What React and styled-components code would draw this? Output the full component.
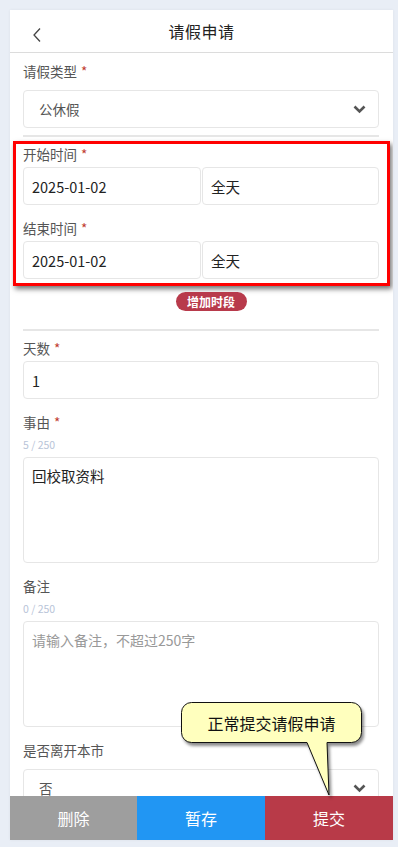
import React from 'react';
import styled, { createGlobalStyle } from 'styled-components';

const GlobalStyle = createGlobalStyle`
  html, body {
    margin: 0;
    padding: 0;
    background: #e9eef6;
    font-family: "Noto Sans CJK SC", "Noto Sans", sans-serif;
  }
  * { box-sizing: border-box; }
`;

const Page = styled.div`
  padding: 10px 5px 7px 10px;
`;

const Panel = styled.div`
  position: relative;
  width: 383px;
  height: 830px;
  background: #fff;
  display: flex;
  flex-direction: column;
  box-shadow: 0 0 3px rgba(0, 0, 0, 0.06);
`;

const Header = styled.div`
  height: 43px;
  flex-shrink: 0;
  display: flex;
  align-items: center;
  justify-content: center;
  position: relative;
  border-bottom: 1px solid #dcdcdc;
`;

const BackButton = styled.div`
  position: absolute;
  left: 21px;
  top: 14px;
  width: 14px;
  height: 16px;
`;

const Title = styled.div`
  font-size: 16px;
  color: #222;
  letter-spacing: 0.5px;
`;

const Body = styled.div`
  flex: 1;
  overflow: hidden;
  padding: 8px 14px 0 13px;
`;

const Label = styled.div`
  font-size: 13.5px;
  line-height: 20px;
  color: #555;
  margin-top: ${p => p.$top || 0}px;
`;

const Star = styled.span`
  color: #c0392b;
  margin-left: 4px;
`;

const Select = styled.div`
  height: 38px;
  margin-top: 9px;
  border: 1px solid #e6e6e6;
  border-radius: 4px;
  display: flex;
  align-items: center;
  justify-content: space-between;
  padding: 0 12px 0 15px;
  font-size: 13.5px;
  color: #555;
`;

const Divider = styled.div`
  height: 2px;
  background: #e6e6e6;
  margin-top: ${p => p.$top || 0}px;
`;

const Highlight = styled.div`
  margin: 4px -11px 0 -10px;
  border: 3px solid #ff0000;
  padding: 0 8px 4px 7px;
  box-shadow: 2px 3px 5px rgba(0, 0, 0, 0.55);
`;

const DateRow = styled.div`
  display: grid;
  grid-template-columns: 178px 1fr;
  gap: 1px;
  margin-top: 3px;
`;

const Input = styled.div`
  height: 38px;
  border: 1px solid #e6e6e6;
  border-radius: 4px;
  display: flex;
  align-items: center;
  padding-left: 8px;
  font-size: 14.5px;
  color: #222;
  margin-top: ${p => p.$top || 0}px;
`;

const AddRow = styled.div`
  display: flex;
  justify-content: center;
  padding-left: 20px;
  margin-top: 6px;
`;

const AddButton = styled.div`
  width: 71px;
  height: 19px;
  border-radius: 10px;
  background: #b83a4b;
  color: #fff;
  font-size: 12px;
  font-weight: bold;
  line-height: 19px;
  text-align: center;
`;

const Count = styled.div`
  font-size: 10.5px;
  line-height: 16px;
  color: #b8c4d8;
  margin-top: 5px;
`;

const TextArea = styled.div`
  position: relative;
  height: 106px;
  margin-top: 4px;
  border: 1px solid #e6e6e6;
  border-radius: 4px;
  padding: 6px 8px;
  font-size: ${p => (p.$placeholder ? 14 : 14.5)}px;
  line-height: 24px;
  color: ${p => (p.$placeholder ? '#999' : '#222')};
`;

const Footer = styled.div`
  height: 44px;
  flex-shrink: 0;
  display: grid;
  grid-template-columns: 127px 128px 1fr;
`;

const FooterButton = styled.div`
  background: ${p => p.$bg};
  color: #fff;
  font-size: 16px;
  display: flex;
  align-items: center;
  justify-content: center;
`;

const Callout = styled.div`
  position: absolute;
  left: 171px;
  top: 692px;
  width: 190px;
  height: 100px;
`;

const CalloutText = styled.div`
  position: relative;
  width: 181px;
  height: 41px;
  display: flex;
  align-items: center;
  justify-content: center;
  font-size: 16px;
  color: #111;
`;

const CalloutShape = styled.svg`
  position: absolute;
  left: 0;
  top: 0;
  filter: drop-shadow(2px 3px 1.5px rgba(0, 0, 0, 0.45));
`;

function Chevron() {
  return (
    <svg width="13" height="9" viewBox="0 0 13 9">
      <polyline points="1.5,1.5 6.5,6.5 11.5,1.5" fill="none" stroke="#555" strokeWidth="2.6" />
    </svg>
  );
}

function App() {
  return (
    <Page>
      <GlobalStyle />
      <Panel>
        <Header>
          <BackButton>
            <svg width="14" height="16" viewBox="0 0 14 16">
              <polyline points="9,1.5 3,8 9,14.5" fill="none" stroke="#444" strokeWidth="1.3" />
            </svg>
          </BackButton>
          <Title>请假申请</Title>
        </Header>
        <Body>
          <Label>请假类型<Star>*</Star></Label>
          <Select>公休假<Chevron /></Select>
          <Divider $top={7} />
          <Highlight>
            <Label>开始时间<Star>*</Star></Label>
            <DateRow>
              <Input>2025-01-02</Input>
              <Input>全天</Input>
            </DateRow>
            <Label $top={13}>结束时间<Star>*</Star></Label>
            <DateRow>
              <Input>2025-01-02</Input>
              <Input>全天</Input>
            </DateRow>
          </Highlight>
          <AddRow><AddButton>增加时段</AddButton></AddRow>
          <Divider $top={18} />
          <Label $top={7}>天数<Star>*</Star></Label>
          <Input $top={3}>1</Input>
          <Label $top={13}>事由<Star>*</Star></Label>
          <Count>5 / 250</Count>
          <TextArea>回校取资料</TextArea>
          <Label $top={13}>备注</Label>
          <Count>0 / 250</Count>
          <TextArea $placeholder>请输入备注，不超过250字</TextArea>
          <Label $top={13}>是否离开本市</Label>
          <Select>否<Chevron /></Select>
        </Body>
        <Footer>
          <FooterButton $bg="#9e9e9e">删除</FooterButton>
          <FooterButton $bg="#2196f3">暂存</FooterButton>
          <FooterButton $bg="#b83a48">提交</FooterButton>
        </Footer>
        <Callout>
          <CalloutShape width="190" height="100" viewBox="0 0 190 100">
            <path
              d="M10.5,0.5 H170.5 A10,10 0 0 1 180.5,10.5 V30.5 A10,10 0 0 1 170.5,40.5 H146 L148,93 L126,40.5 H10.5 A10,10 0 0 1 0.5,30.5 V10.5 A10,10 0 0 1 10.5,0.5 Z"
              fill="#ffffbe"
              stroke="#111"
              strokeWidth="1"
            />
          </CalloutShape>
          <CalloutText>正常提交请假申请</CalloutText>
        </Callout>
      </Panel>
    </Page>
  );
}

export default App;
